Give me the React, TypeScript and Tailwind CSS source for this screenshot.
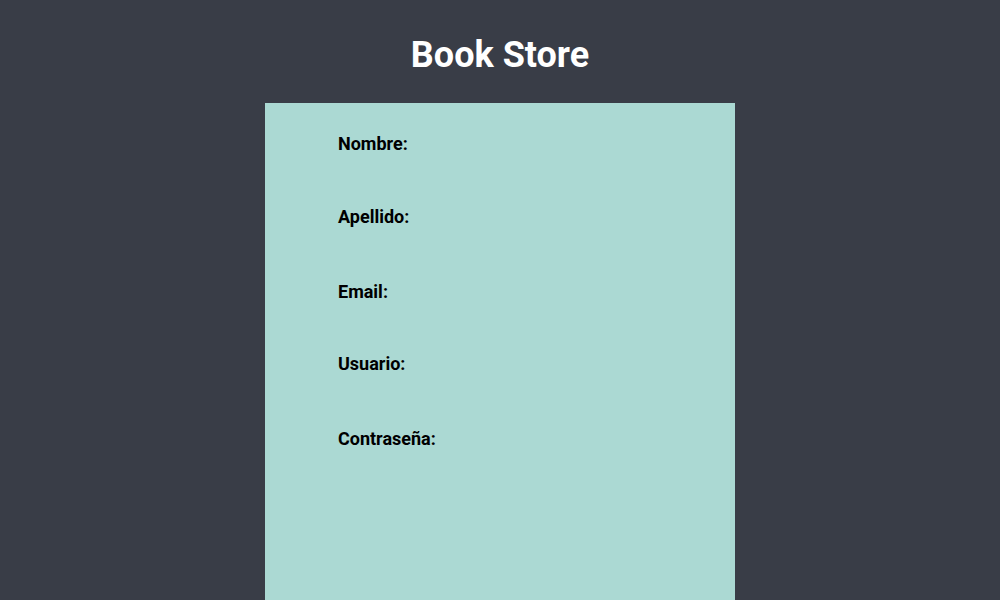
export default function App() {
  const fields = [
    { label: 'Nombre:', mt: 'mt-0' },
    { label: 'Apellido:', mt: 'mt-[49px]' },
    { label: 'Email:', mt: 'mt-[51px]' },
    { label: 'Usuario:', mt: 'mt-[48px]' },
    { label: 'Contraseña:', mt: 'mt-[51px]' },
  ]

  return (
    <div className="min-h-screen bg-[#393d47] flex flex-col items-center pt-[35px] font-['Roboto',sans-serif]">
      <h1 className="text-4xl leading-10 font-bold text-white">Book Store</h1>
      <form className="mt-[28px] w-[470px] h-[497px] bg-[#abd9d3] pl-[73px] pt-[29px] flex flex-col items-start">
        {fields.map((f) => (
          <label key={f.label} className={`${f.mt} text-lg leading-6 font-bold text-black`}>
            {f.label}
          </label>
        ))}
      </form>
    </div>
  )
}
